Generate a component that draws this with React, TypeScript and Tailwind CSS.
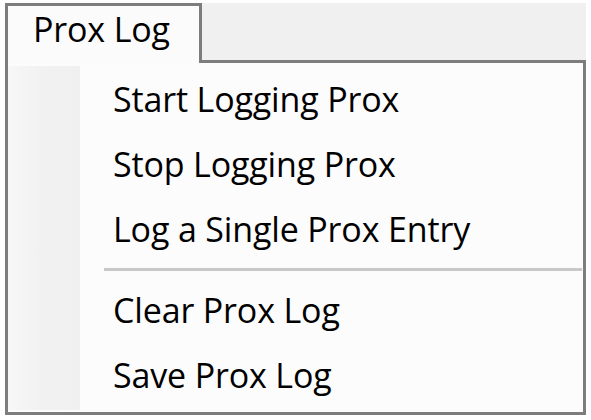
import React from 'react';

const items = ['Start Logging Prox', 'Stop Logging Prox', 'Log a Single Prox Entry'];
const items2 = ['Clear Prox Log', 'Save Prox Log'];

const MenuItem = ({ label }: { label: string }) => (
  <div className="h-[65px] flex items-center pl-[105px] text-[34px] tracking-[-0.15px] leading-none text-black">
    {label}
  </div>
);

const App = () => {
  return (
    <div className="w-[591px] h-[420px] bg-white pt-[3px] pl-[5px] font-['Open_Sans',sans-serif]">
      <div className="w-[581px] flex flex-col">
        {/* tab row */}
        <div className="flex h-[60px]">
          <div className="w-[197px] border-[#7d7d7d] border-t-[3px] border-l-[3px] border-r-[3px] bg-[#fbfbfb] pl-[25px] pt-[6px] text-[34px] tracking-[-0.15px] leading-none text-black">
            Prox Log
          </div>
          <div className="flex-1 bg-[#f0f0f0] border-b-[3px] border-[#7d7d7d]" />
        </div>
        {/* dropdown */}
        <div className="relative h-[352px] border-[#7d7d7d] border-l-[3px] border-r-[3px] border-b-[3px] bg-[#fcfcfc] py-[3px]">
          <div className="absolute left-0 top-[3px] bottom-[2px] w-[72px] bg-gradient-to-r from-[#f7f7f7] via-[#f1f1f1] to-[#f0f0f0]" />
          <div className="relative">
            {items.map((l) => (
              <MenuItem key={l} label={l} />
            ))}
            <div className="h-[16px] flex items-center">
              <div className="ml-[96px] mr-[1px] flex-1 h-[3px] bg-[#c8c8c8]" />
            </div>
            {items2.map((l) => (
              <MenuItem key={l} label={l} />
            ))}
          </div>
        </div>
      </div>
    </div>
  );
};

export default App;
